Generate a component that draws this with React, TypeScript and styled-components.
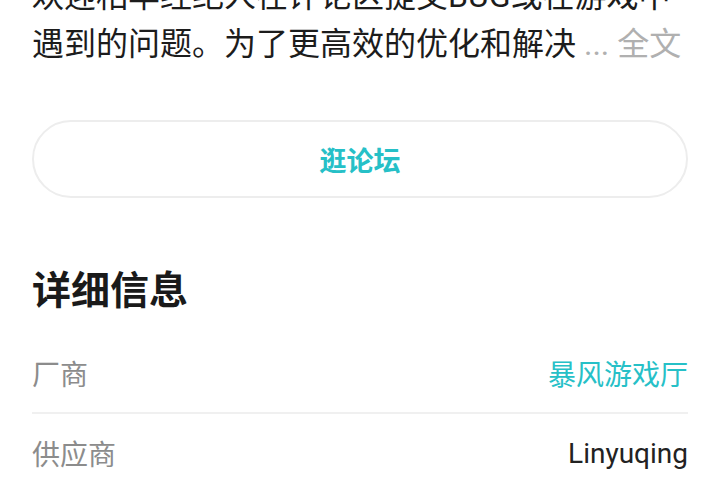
import React from 'react';
import styled, { createGlobalStyle } from 'styled-components';

const GlobalStyle = createGlobalStyle`
  html, body {
    margin: 0;
    padding: 0;
    background: #ffffff;
    overflow: hidden;
  }
  body {
    font-family: Roboto, "Noto Sans CJK SC", "Noto Sans", sans-serif;
    color: #1f1f1f;
  }
`;

const teal = '#26c0c7';

// the page is scrolled a little, so the intro starts above the fold
const StyledPage = styled.div`
  display: flex;
  flex-direction: column;
  padding: 0 32px;
  margin-top: -28px;
`;

const StyledIntro = styled.p`
  margin: 0;
  font-size: 32px;
  line-height: 48px;
  color: #1c1c1c;
`;

const StyledMore = styled.span`
  color: #b0b0b0;
`;

const StyledForumButton = styled.button`
  margin-top: 52px;
  height: 78px;
  width: 100%;
  border: 2px solid #ededed;
  border-radius: 39px;
  background: #ffffff;
  font-family: inherit;
  font-size: 27px;
  font-weight: 700;
  color: ${teal};
  cursor: pointer;
`;

const StyledSectionTitle = styled.h2`
  margin: 68px 0 18px;
  font-size: 39px;
  line-height: 50px;
  font-weight: 700;
  color: #1a1a1a;
`;

const StyledInfoList = styled.div`
  display: flex;
  flex-direction: column;
`;

const StyledInfoRow = styled.div`
  display: flex;
  align-items: center;
  justify-content: space-between;
  height: 78px;
  border-bottom: 2px solid #f0f0f0;
  &:last-child {
    border-bottom: none;
  }
`;

const StyledLabel = styled.span`
  font-size: 28px;
  color: #8c8c8c;
`;

const StyledValue = styled.span<{ $accent?: boolean }>`
  font-size: 28px;
  color: ${({ $accent }) => ($accent ? teal : '#222222')};
`;

interface InfoItem {
  label: string;
  value: string;
  accent?: boolean;
}

const infoItems: InfoItem[] = [
  { label: '厂商', value: '暴风游戏厅', accent: true },
  { label: '供应商', value: 'Linyuqing' },
];

const App = (): JSX.Element => (
  <>
    <GlobalStyle />
    <StyledPage>
      <StyledIntro>
        欢迎相羊经纪人在评论区提交BUG或在游戏中遇到的问题。为了更高效的优化和解决
        <StyledMore> ... 全文</StyledMore>
      </StyledIntro>
      <StyledForumButton type="button">逛论坛</StyledForumButton>
      <StyledSectionTitle>详细信息</StyledSectionTitle>
      <StyledInfoList>
        {infoItems.map((item) => (
          <StyledInfoRow key={item.label}>
            <StyledLabel>{item.label}</StyledLabel>
            <StyledValue $accent={item.accent}>{item.value}</StyledValue>
          </StyledInfoRow>
        ))}
      </StyledInfoList>
    </StyledPage>
  </>
);

export default App;
